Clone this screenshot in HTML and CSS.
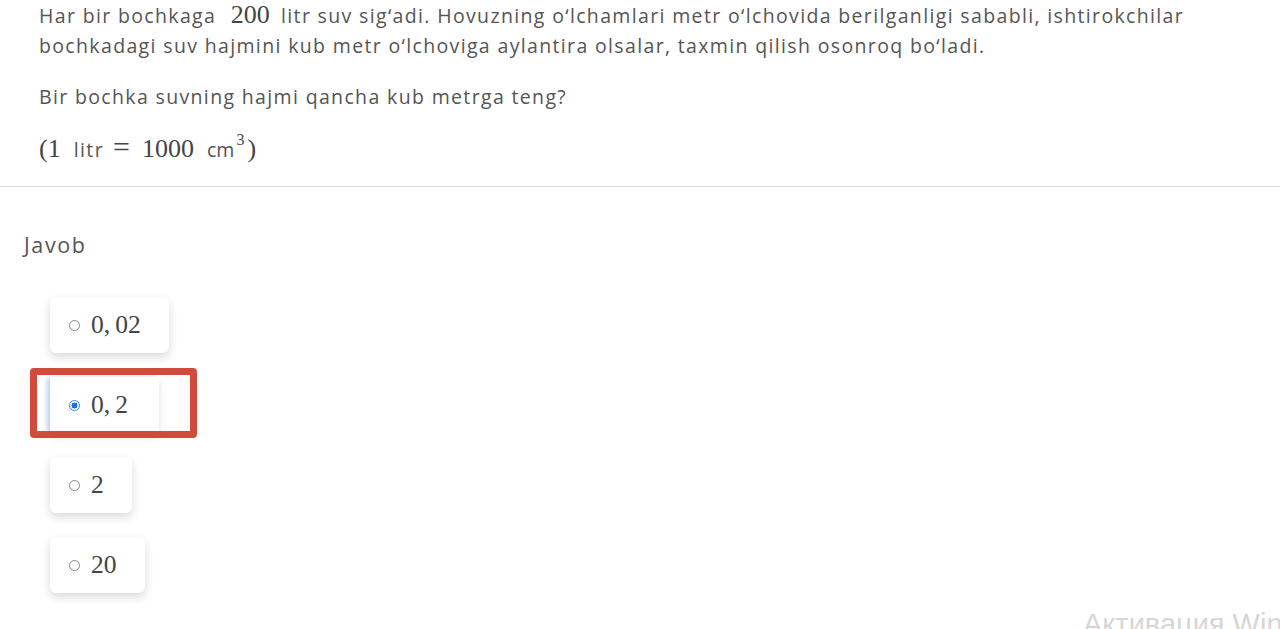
FILE: index.html
```html
<!DOCTYPE html>
<html>
<head>
<meta charset="utf-8">
<link rel="stylesheet" href="styles.css">
</head>
<body>
<div class="question">
  <p class="para">Har bir bochkaga <span class="math num">200</span> litr suv sig‘adi. Hovuzning o‘lchamlari metr o‘lchovida berilganligi sababli, ishtirokchilar bochkadagi suv hajmini kub metr o‘lchoviga aylantira olsalar, taxmin qilish osonroq bo‘ladi.</p>
  <p class="para ask">Bir bochka suvning hajmi qancha kub metrga teng?</p>
  <p class="formula"><span class="math">(1</span><span class="unit litr">litr</span><span class="math eq">=</span><span class="math">1000</span><span class="unit cm">cm</span><sup class="math">3</sup><span class="math close">)</span></p>
</div>
<div class="answer">
  <div class="label">Javob</div>
  <div class="options">
    <div class="opt"><span class="radio"></span><span class="val">0,&thinsp;02</span></div>
    <div class="opt selected"><span class="radio on"></span><span class="val">0,&thinsp;2</span><span class="mark"></span></div>
    <div class="opt"><span class="radio"></span><span class="val">2</span></div>
    <div class="opt"><span class="radio"></span><span class="val">20</span></div>
  </div>
</div>
<div class="watermark">Активация Windows</div>
</body>
</html>
```
FILE: styles.css
```css
html, body { margin: 0; padding: 0; background: #fff; overflow: hidden; }
body { width: 1280px; height: 629px; position: relative; font-family: "Open Sans", "Lato", sans-serif; color: #555; }
.question { padding: 1px 0 0 39px; border-bottom: 1px solid #dcdcdc; height: 187px; box-sizing: border-box; }
.para { margin: 0; font-size: 19.5px; line-height: 30px; width: 1160px; letter-spacing: 1.35px; }
.ask { margin-top: 21px; }
.formula { margin: 18px 0 0 0; line-height: 34px; color: #444; white-space: nowrap; letter-spacing: 0; }
.math { font-family: "Liberation Serif", "DejaVu Serif", serif; font-size: 26px; color: #444; letter-spacing: 0; }
.para .num { margin: 0 5px 0 8px; font-size: 26px; line-height: 20px; }
.unit { font-family: "Open Sans", sans-serif; font-size: 19.5px; color: #555; }
.litr { margin: 0 9px 0 13px; letter-spacing: 1.4px; }
.eq { font-size: 30px; margin-right: 12px; }
.cm { margin-left: 13px; letter-spacing: 0; }
.formula sup { font-size: 16px; vertical-align: 12px; line-height: 0; margin-left: 2px; margin-right: 3px; }
.answer { padding: 46px 0 0 24px; }
.label { font-size: 21.5px; line-height: 24px; color: #555; letter-spacing: 1.6px; }
.options { display: flex; flex-direction: column; align-items: flex-start; gap: 24px; margin-top: 40px; margin-left: 26px; }
.opt { position: relative; display: flex; align-items: center; height: 56px; padding: 0 28px 0 19px; background: #fff; border-radius: 6px; box-shadow: 0 4px 10px rgba(0,0,0,0.15); box-sizing: border-box; }
.selected { box-shadow: -3px 0 5px rgba(90,150,240,0.35), 0 4px 10px rgba(0,0,0,0.10); border-radius: 2px; padding-right: 31px; }
.mark { position: absolute; left: -20px; top: -9px; width: 167px; height: 70px; border: 7px solid #d24a3b; border-radius: 4px; box-sizing: border-box; }
.radio { width: 11px; height: 11px; border: 1.4px solid #888; border-radius: 50%; margin-right: 11px; box-sizing: border-box; flex: none; }
.radio.on { border: 1.5px solid #3a86f0; background: radial-gradient(circle, #1a73e8 0 2.8px, #fff 3.2px); }
.val { font-family: "Liberation Serif", "DejaVu Serif", serif; font-size: 25.5px; color: #444; line-height: 30px; }
.watermark { position: absolute; left: 1083px; top: 608px; width: 197px; overflow: hidden; font-family: "Liberation Sans", sans-serif; font-size: 29px; color: #d6d6d6; white-space: nowrap; }
```
